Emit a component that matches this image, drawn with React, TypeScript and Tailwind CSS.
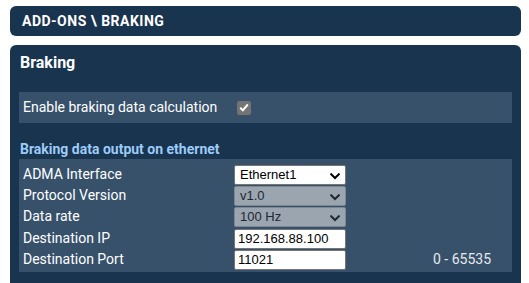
import React from "react";

const Chevron = ({ dark }: { dark?: boolean }) => (
  <svg width="10" height="7" viewBox="0 0 10 7" className="absolute right-[5px] top-[7px]">
    <path d="M1.2 1.3 L5 5 L8.8 1.3" fill="none" stroke={dark ? "#1f2832" : "#000000"} strokeWidth="2" strokeLinecap="square" />
  </svg>
);

const Select = ({ value, disabled }: { value: string; disabled?: boolean }) =>
  disabled ? (
    <div
      className="relative h-[20px] w-[112px] rounded-[2px] border border-[#7d8792] bg-[#9ba5b0] pl-[5px] text-[13px] leading-[18px] text-[#1e2833]"
      style={{ fontFamily: "'Liberation Sans', Arial, sans-serif" }}
    >
      {value}
      <Chevron dark />
    </div>
  ) : (
    <div
      className="relative h-[20px] w-[112px] rounded-[2px] border border-[#767676] bg-white pl-[5px] text-[13px] leading-[18px] text-black"
      style={{ fontFamily: "'Liberation Sans', Arial, sans-serif" }}
    >
      {value}
      <Chevron />
    </div>
  );

const Input = ({ value }: { value: string }) => (
  <div
    className="h-[20px] w-[112px] rounded-[2px] border border-[#767676] bg-white pl-[3px] text-[13px] leading-[18px] text-black"
    style={{ fontFamily: "'Liberation Sans', Arial, sans-serif" }}
  >
    {value}
  </div>
);

export default function App() {
  const rows: { label: string; field: React.ReactNode; extra?: string }[] = [
    { label: "ADMA Interface", field: <Select value="Ethernet1" /> },
    { label: "Protocol Version", field: <Select value="v1.0" disabled /> },
    { label: "Data rate", field: <Select value="100 Hz" disabled /> },
    { label: "Destination IP", field: <Input value="192.168.88.100" /> },
    { label: "Destination Port", field: <Input value="11021" />, extra: "0 - 65535" },
  ];
  return (
    <div
      className="h-[283px] w-[529px] overflow-hidden bg-white px-[10px] pt-[6px] pr-[8px]"
      style={{ fontFamily: "Roboto, 'Noto Sans', sans-serif" }}
    >
      <div className="flex h-[30px] items-center rounded-[6px] bg-[#19344f] pl-[12px] text-[14px] font-bold tracking-[0.5px] text-white">
        ADD-ONS \ BRAKING
      </div>
      <div className="mt-[9px] h-[260px] rounded-t-[6px] bg-[#19344f] px-[9px] pt-[8px]">
        <div className="h-[20px] pl-[1px] text-[16px] font-bold leading-[20px] text-white">Braking</div>
        <div className="mt-[19px] flex h-[31px] items-center bg-[#37516b] pl-[4px] text-[14px] text-white">
          <div className="w-[211px]">Enable braking data calculation</div>
          <div className="ml-[3px] flex h-[14px] w-[14px] items-center justify-center rounded-[2px] bg-[#747474]">
            <svg width="10" height="9" viewBox="0 0 10 9">
              <path d="M1.2 4.8 L3.8 7.3 L8.8 1.5" fill="none" stroke="#fff" strokeWidth="2" />
            </svg>
          </div>
        </div>
        <div className="mt-[17px] h-[19px] pl-[1px] text-[14px] font-bold leading-[19px] text-[#9ccbf7]">
          Braking data output on ethernet
        </div>
        <div className="flex h-[113px] flex-col bg-[#37516b] pt-[5px] text-[14px] text-white">
          {rows.map((r, i) => (
            <div key={i} className={"flex h-[21px] items-center " + (i === 3 ? "mt-[1px]" : "")}>
              <div className="w-[215px] pl-[4px]">{r.label}</div>
              {r.field}
              {r.extra && <div className="pl-[87px] text-[#e6e9ee]">{r.extra}</div>}
            </div>
          ))}
        </div>
      </div>
    </div>
  );
}
